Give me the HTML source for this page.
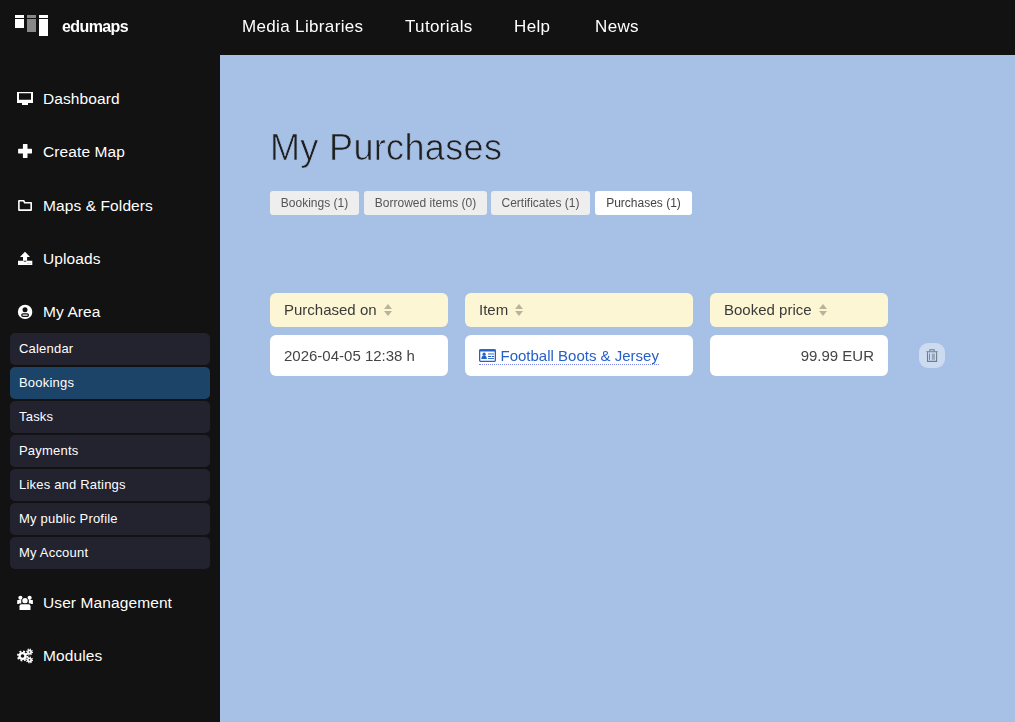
<!DOCTYPE html>
<html><head><meta charset="utf-8">
<style>
*{box-sizing:border-box;margin:0;padding:0}
html,body{width:1015px;height:722px;overflow:hidden;background:#121212;font-family:"Liberation Sans",sans-serif}
.wrap{position:absolute;left:0;top:0;width:1015px;height:722px;will-change:transform}
.logo{position:absolute;left:15px;top:15px}
.logo div{position:absolute;background:#fff}
.brand{position:absolute;left:62px;top:17.5px;color:#fff;font-weight:bold;font-size:16px;letter-spacing:-0.6px}
.nav{position:absolute;top:17px;color:#fff;font-size:17px;letter-spacing:0.35px;white-space:nowrap}
.mi{position:absolute;left:43px;color:#fff;font-size:15.5px;letter-spacing:0.1px;white-space:nowrap;line-height:18px}
.sub{position:absolute;left:10px;width:200px;height:32px;background:#23222f;border-radius:5px;color:#fff;font-size:13px;letter-spacing:0.2px;padding-left:9px;line-height:32px}
.sub.act{background:#1c4368}
.icons{position:absolute;left:0;top:0}
.main{position:absolute;left:220px;top:55px;width:795px;height:667px;background:#a7c0e6}
h1{position:absolute;left:270px;top:127px;font-size:36px;font-weight:normal;color:#1f1f1f;white-space:nowrap;letter-spacing:0.35px;-webkit-text-stroke:0.7px #a7c0e6}
.tab{position:absolute;top:191px;height:24px;background:#eee;border-radius:3px;font-size:12px;color:#555;line-height:24px;text-align:center;white-space:nowrap}
.tab.on{background:#fff;color:#444}
.th{position:absolute;top:293px;height:34px;background:#fcf6d4;border-radius:6px;font-size:15px;color:#3a3a3a;line-height:34px;padding-left:14px;white-space:nowrap}
.td{position:absolute;top:335px;height:41px;background:#fff;border-radius:6px;font-size:15px;color:#444;line-height:41px;padding-left:14px;white-space:nowrap}
.sort{display:inline-block;position:relative;width:9px;height:13px;margin-left:7px;vertical-align:-1px;top:0.7px}
.sort:before{content:"";position:absolute;left:0;top:0;border-left:4.5px solid transparent;border-right:4.5px solid transparent;border-bottom:5px solid #b9b39a}
.sort:after{content:"";position:absolute;left:0;top:7.6px;border-left:4.5px solid transparent;border-right:4.5px solid transparent;border-top:5px solid #b9b39a}
.trash{position:absolute;left:919px;top:343px;width:26px;height:25px;border-radius:9px;background:#cddbf1}
a.lnk{color:#2560c8;text-decoration:none;border-bottom:1px dotted #7b86ee}
</style></head><body>
<div class="main"></div>
<div class="logo">
  <div style="left:0;top:0;width:9px;height:3px"></div>
  <div style="left:0;top:4px;width:9px;height:9px"></div>
  <div style="left:12px;top:0;width:9px;height:3px;background:#888"></div>
  <div style="left:12px;top:4px;width:9px;height:13px;background:#888"></div>
  <div style="left:24px;top:0;width:9px;height:3px"></div>
  <div style="left:24px;top:4px;width:9px;height:17px"></div>
</div>

<svg class="icons" width="40" height="722" viewBox="0 0 40 722">
  <!-- monitor -->
  <path fill="#fff" fill-rule="evenodd" d="M17 92h16v11H17z M19 93.3h12v6.4H19z"/>
  <path fill="#fff" d="M22 103h6v2h-6z"/>
  <!-- plus -->
  <path fill="#fff" d="M22.9 144.4q0-0.4 0.4-0.4h3.8q0.4 0 0.4 0.4v4.4h4.1q0.4 0 0.4 0.4v3.8q0 0.4-0.4 0.4h-4.1v4.2q0 0.4-0.4 0.4h-3.8q-0.4 0-0.4-0.4v-4.2h-4.4q-0.4 0-0.4-0.4v-3.8q0-0.4 0.4-0.4h4.4z"/>
  <!-- folder -->
  <path fill="none" stroke="#fff" stroke-width="1.6" stroke-linejoin="round" d="M18.9 200.7H23.7L24.7 202.8H31.2V210.1H18.9Z"/>
  <!-- upload -->
  <path fill="#fff" d="M25 251.7L30 256.9H27.1V260.8H23V256.9H20Z"/>
  <path fill="#fff" d="M18 260.8H23.2Q25 262.6 26.9 260.8H32.3V265.1H18Z"/>
  <circle cx="27.8" cy="263.4" r="0.45" fill="#777"/><circle cx="29" cy="263.4" r="0.45" fill="#777"/><circle cx="30.2" cy="263.4" r="0.45" fill="#777"/>
  <!-- user circle -->
  <circle cx="25.1" cy="311.9" r="7.2" fill="#fff"/>
  <circle cx="25" cy="309.8" r="2.5" fill="#121212"/>
  <rect x="21.8" y="313.9" width="6.6" height="2.4" rx="1.2" fill="#fff" stroke="#121212" stroke-width="1.3"/>
  <!-- users -->
  <circle cx="20.4" cy="597.8" r="2.1" fill="#fff"/>
  <circle cx="29.6" cy="597.8" r="2.1" fill="#fff"/>
  <path fill="#fff" d="M17.2 600.4q0-0.5 0.5-0.5h3.6v4h-4.1z M32.9 600.4q0-0.5-0.5-0.5h-3.6v4h4.1z"/>
  <circle cx="25" cy="600.8" r="3.3" fill="#121212"/>
  <circle cx="25" cy="600.8" r="2.7" fill="#fff"/>
  <path fill="#121212" d="M18.9 603.6h12.2v6.9h-12.2z"/>
  <path fill="#fff" d="M19.5 606.2q0-2 2-2h7q2 0 2 2v3.9h-11z"/>
  <!-- cogs -->
  <circle cx="22.5" cy="656" r="4.7" fill="none" stroke="#fff" stroke-width="1.8" stroke-dasharray="1.85 1.85"/>
  <circle cx="22.5" cy="656" r="4.1" fill="#fff"/>
  <circle cx="22.5" cy="656" r="1.8" fill="#121212"/>
  <circle cx="29.5" cy="652" r="2.9" fill="none" stroke="#fff" stroke-width="1.2" stroke-dasharray="1.14 1.14"/>
  <circle cx="29.5" cy="652" r="2.5" fill="#fff"/>
  <circle cx="29.5" cy="652" r="0.8" fill="#121212"/>
  <circle cx="29.5" cy="659.9" r="2.9" fill="none" stroke="#fff" stroke-width="1.2" stroke-dasharray="1.14 1.14"/>
  <circle cx="29.5" cy="659.9" r="2.5" fill="#fff"/>
  <circle cx="29.5" cy="659.9" r="0.8" fill="#121212"/>
</svg>

<div class="mi" style="top:90px">Dashboard</div>
<div class="mi" style="top:143px">Create Map</div>
<div class="mi" style="top:197px">Maps &amp; Folders</div>
<div class="mi" style="top:250px">Uploads</div>
<div class="mi" style="top:303px">My Area</div>
<div class="sub" style="top:333px">Calendar</div>
<div class="sub act" style="top:367px">Bookings</div>
<div class="sub" style="top:401px">Tasks</div>
<div class="sub" style="top:435px">Payments</div>
<div class="sub" style="top:469px">Likes and Ratings</div>
<div class="sub" style="top:503px">My public Profile</div>
<div class="sub" style="top:537px">My Account</div>
<div class="mi" style="top:594px">User Management</div>
<div class="mi" style="top:647px">Modules</div>

<div class="wrap">
<div class="brand">edumaps</div>
<div class="nav" style="left:242px">Media Libraries</div>
<div class="nav" style="left:405px">Tutorials</div>
<div class="nav" style="left:514px">Help</div>
<div class="nav" style="left:595px">News</div>

<h1>My Purchases</h1>
<div class="tab" style="left:270px;width:89px">Bookings (1)</div>
<div class="tab" style="left:364px;width:123px">Borrowed items (0)</div>
<div class="tab" style="left:491px;width:99px">Certificates (1)</div>
<div class="tab on" style="left:595px;width:97px">Purchases (1)</div>

<div class="th" style="left:270px;width:178px">Purchased on<span class="sort"></span></div>
<div class="th" style="left:465px;width:228px">Item<span class="sort"></span></div>
<div class="th" style="left:710px;width:178px">Booked price<span class="sort"></span></div>

<div class="td" style="left:270px;width:178px">2026-04-05 12:38 h</div>
<div class="td" style="left:465px;width:228px"><a class="lnk"><svg width="17" height="13" viewBox="0 0 17 13" style="vertical-align:-1px;margin-right:4.5px"><rect x="0.65" y="0.9" width="15.7" height="11.45" rx="1.2" fill="none" stroke="#2560c8" stroke-width="1.3"/><rect x="0.2" y="0.2" width="16.6" height="2.2" rx="1" fill="#2560c8"/><circle cx="5.1" cy="5.2" r="1.6" fill="#2560c8"/><path d="M2.4 9.9c0-2.2 1.2-3.3 2.7-3.3s2.7 1.1 2.7 3.3z" fill="#2560c8"/><rect x="9" y="4.2" width="6" height="1.5" fill="#7e9ad8"/><rect x="9" y="7" width="3.2" height="1" fill="#2560c8"/><rect x="12.8" y="7" width="2.2" height="1" fill="#2560c8"/><rect x="9" y="9" width="6" height="0.9" fill="#2560c8"/></svg>Football Boots &amp; Jersey</a></div>
<div class="td" style="left:710px;width:178px;text-align:right;padding-right:14px;padding-left:0">99.99 EUR</div>

<div class="trash"><svg width="26" height="25" viewBox="0 0 26 25"><path d="M10.9 8.3V6.7h4.3V8.3" fill="none" stroke="#6f7c8e" stroke-width="1.1"/><path d="M7.1 8.2h11.8l-0.5 1.1H7.6z" fill="#6f7c8e"/><path d="M8.5 9.2V18.4H17.6V9.2" fill="none" stroke="#6f7c8e" stroke-width="1.1"/><rect x="10.1" y="10.6" width="0.9" height="6.2" fill="#6f7c8e"/><rect x="12.9" y="10.6" width="0.6" height="6.2" fill="#6f7c8e"/><rect x="13.9" y="10.6" width="0.6" height="6.2" fill="#6f7c8e"/><rect x="14.9" y="10.6" width="0.6" height="6.2" fill="#6f7c8e"/></svg></div>
</div>
</body></html>
